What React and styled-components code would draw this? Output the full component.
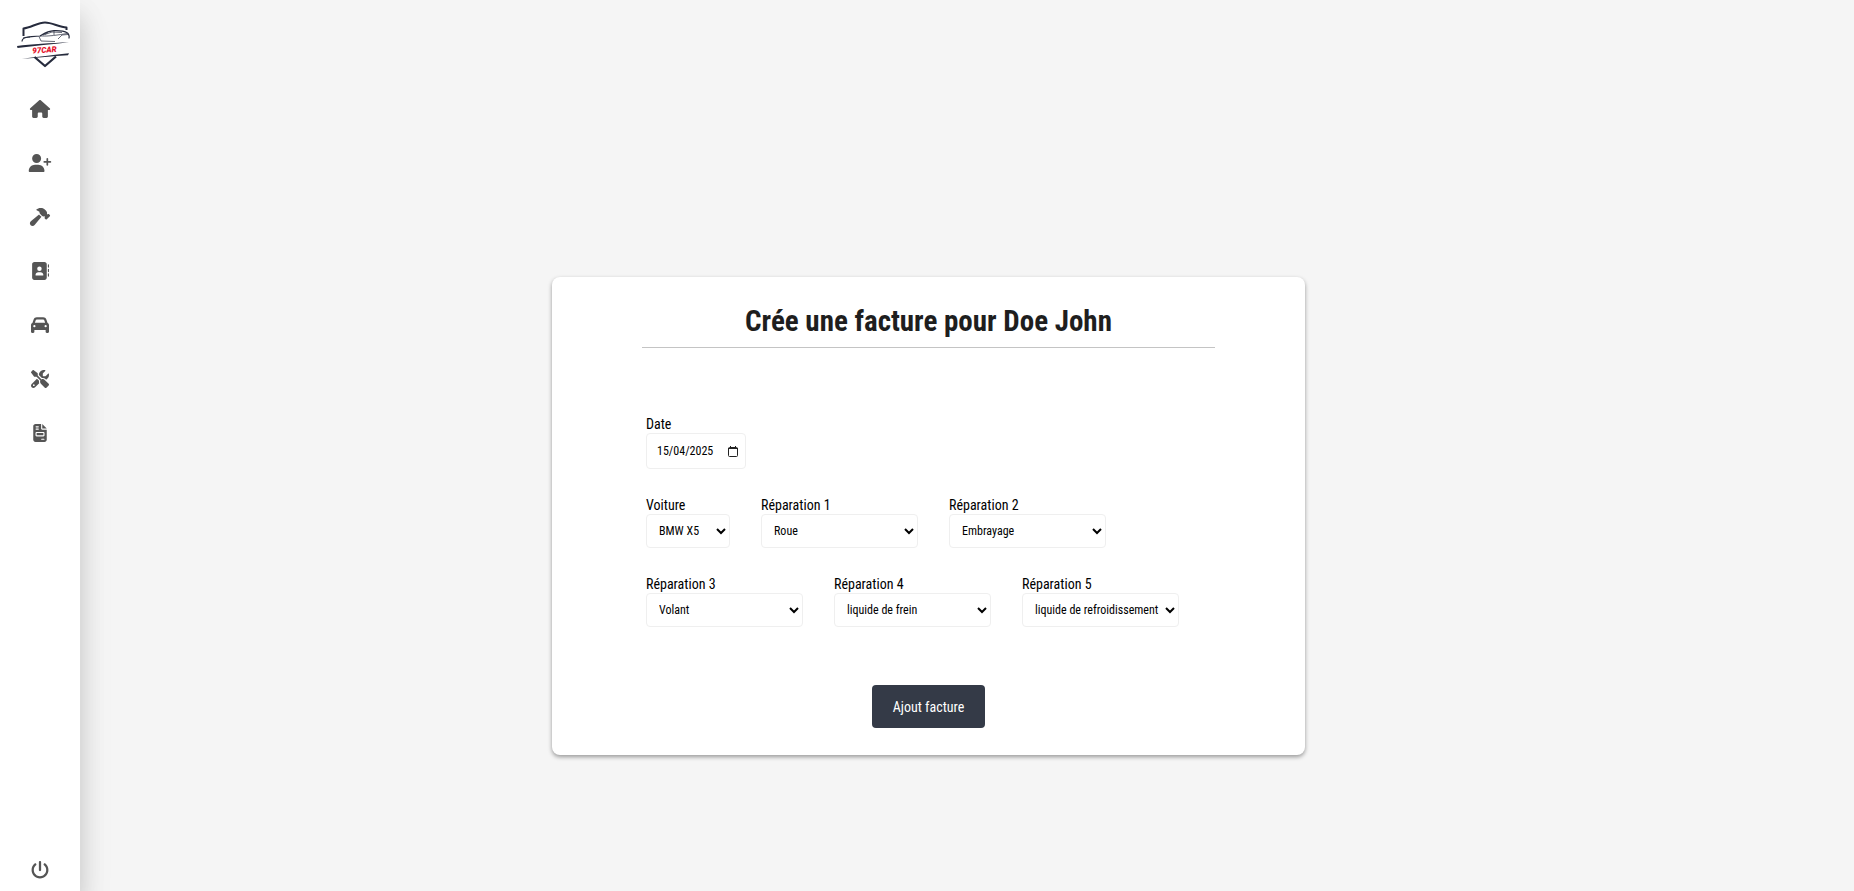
import React, { useState } from "react";
import styled, { createGlobalStyle } from "styled-components";
import {
  FaHouse,
  FaUserPlus,
  FaHammer,
  FaAddressBook,
  FaCar,
  FaScrewdriverWrench,
  FaFileInvoice,
  FaPowerOff,
} from "react-icons/fa6";

const FONT = '"Roboto Condensed", "Liberation Sans Narrow", Roboto, sans-serif';

const GlobalStyle = createGlobalStyle`
  *, *::before, *::after { box-sizing: border-box; }
  body {
    margin: 0;
    background: #f5f5f5;
    color: #000;
    font-family: ${FONT};
    font-size: 14px;
  }
`;

const Layout = styled.div`
  display: flex;
  min-height: 100vh;
`;

const Sidebar = styled.nav`
  display: flex;
  flex-direction: column;
  align-items: center;
  width: 80px;
  flex-shrink: 0;
  padding: 16px 1px 12px 0;
  background: #fff;
  box-shadow: 0 19px 38px rgba(0, 0, 0, 0.08), 0 15px 24px rgba(0, 0, 0, 0.15);
`;

const LogoLink = styled.a`
  display: block;
  margin-left: 9px;
  svg { display: block; width: 60px; height: 54px; }
`;

const NavList = styled.ul`
  display: flex;
  flex-direction: column;
  gap: 36px;
  margin: 30px 0 0;
  padding: 0;
  list-style: none;
`;

const NavLink = styled.a`
  display: block;
  color: #555;
  svg { display: block; width: 24px; height: 18px; }
`;

const LogoutLink = styled(NavLink)`
  margin-top: auto;
`;

const Main = styled.main`
  display: flex;
  flex: 1;
  align-items: center;
  justify-content: center;
  padding: 141px 77px 0 0;
`;

const Card = styled.section`
  width: 100%;
  max-width: 753px;
  padding: 24px 90px 27px;
  border-radius: 8px;
  background: #fff;
  box-shadow: 0 2px 4px rgba(0, 0, 0, 0.38);
`;

const Title = styled.h1`
  margin: 0;
  padding-bottom: 6px;
  border-bottom: 1px solid #c4c4c4;
  color: #1e1e1e;
  font-size: 29px;
  line-height: 40px;
  text-align: center;
`;

const Form = styled.form`
  display: flex;
  flex-direction: column;
  gap: 28px;
  padding: 68px 4px 0;
`;

const Row = styled.div`
  display: flex;
  flex-wrap: wrap;
  gap: 28px 31px;
`;

const Field = styled.div`
  display: flex;
  flex-direction: column;
  width: ${({ $width }) => $width}px;
`;

const Label = styled.label`
  line-height: 17px;
  white-space: nowrap;
`;

const Select = styled.select`
  width: 100%;
  height: 34px;
  padding: 0 0 0 8px;
  border: 1px solid #efefef;
  border-radius: 4px;
  background-color: #fff;
  color: #000;
  font-family: inherit;
  font-size: 12px;
`;

const DateBox = styled.div`
  display: flex;
  align-items: center;
  height: 36px;
  padding: 0 7px 0 10px;
  border: 1px solid #efefef;
  border-radius: 4px;
`;

const DateInput = styled.input`
  flex: 1;
  min-width: 0;
  padding: 0;
  border: 0;
  outline: 0;
  background: transparent;
  color: #000;
  font-family: inherit;
  font-size: 12px;
`;

const PickerButton = styled.button`
  display: block;
  padding: 0;
  border: 0;
  background: transparent;
  cursor: pointer;
  svg { display: block; width: 10px; height: 11px; }
`;

const SubmitButton = styled.button`
  align-self: center;
  height: 43px;
  margin-top: 30px;
  padding: 0 21px;
  border: 0;
  border-radius: 4px;
  background: #343a47;
  color: #fff;
  font-family: inherit;
  font-size: 14px;
  cursor: pointer;
`;

const LogoText = styled.text`
  fill: #e5112b;
  font-family: Roboto, sans-serif;
  font-size: 8px;
  font-style: italic;
  font-weight: 900;
`;

const Logo = () => (
  <svg viewBox="0 0 60 54" role="img" aria-label="97CAR">
    <g fill="none" stroke="#262b3d" strokeLinejoin="round">
      <path d="M9.5 20V12.5C17 11.5 24 6.5 31 6.5C38 6.5 45 11 52.5 11.5V14" strokeWidth="2" />
      <path d="M8 25.5C8 22.5 10 21.5 14 21C19 20.500 22 20 26 20C31 17 34 15 40 14.700C46 14.500 51 15.500 53.500 17C55 18.500 55.500 20 55 22.500" strokeWidth="1.200" />
      <path d="M26 20C35 20.500 44 19 53 17.500M25 20.500L27 25L41 25.500M31 18.500L38 16L48 16.500M40 15V19M44 23L48 19L54 18.500" strokeWidth="0.700" />
      <path d="M9 22L16 21M29 19L34 16.500" strokeWidth="0.900" />
      <path d="M20.500 41L31 50L42 40.500" strokeWidth="2.300" />
    </g>
    <g fill="#262b3d">
      <path d="M3 30C17 28 37 27.200 55 26.200C38 28.200 21 29.800 3.500 32Z" />
      <path d="M8 42.800C24 41 39 39 55 37.300L54 39.200C39 40 23 42 8 42.800Z" />
    </g>
    <LogoText x="18.500" y="37.600" transform="rotate(-4 18.500 37.600)">97CAR</LogoText>
  </svg>
);

const NAV = [
  ["Accueil", FaHouse],
  ["Ajouter un client", FaUserPlus],
  ["Ajouter une réparation", FaHammer],
  ["Clients", FaAddressBook],
  ["Voitures", FaCar],
  ["Réparations", FaScrewdriverWrench],
  ["Factures", FaFileInvoice],
];

const REPAIRS = ["Roue", "Embrayage", "Volant", "liquide de frein", "liquide de refroidissement"];

function SelectField({ id, label, width, options, initial }) {
  return (
    <Field $width={width}>
      <Label htmlFor={id}>{label}</Label>
      <Select id={id} name={id} defaultValue={initial}>
        {options.map((option) => (
          <option key={option}>{option}</option>
        ))}
      </Select>
    </Field>
  );
}

function RepairField({ number }) {
  return (
    <SelectField
      id={`reparation-${number}`}
      label={`Réparation ${number}`}
      width={157}
      options={REPAIRS}
      initial={REPAIRS[number - 1]}
    />
  );
}

export default function App() {
  const [date, setDate] = useState("15/04/2025");
  return (
    <>
      <GlobalStyle />
      <Layout>
        <Sidebar aria-label="Navigation principale">
          <LogoLink href="#"><Logo /></LogoLink>
          <NavList>
            {NAV.map(([label, Icon]) => (
              <li key={label}>
                <NavLink href="#" aria-label={label}><Icon /></NavLink>
              </li>
            ))}
          </NavList>
          <LogoutLink href="#" aria-label="Déconnexion"><FaPowerOff /></LogoutLink>
        </Sidebar>
        <Main>
          <Card>
            <Title>Crée une facture pour Doe John</Title>
            <Form onSubmit={(event) => event.preventDefault()}>
              <Row>
                <Field $width={100}>
                  <Label htmlFor="date">Date</Label>
                  <DateBox>
                    <DateInput id="date" name="date" inputMode="numeric" value={date} onChange={(event) => setDate(event.target.value)} />
                    <PickerButton type="button" aria-label="Ouvrir le calendrier">
                      <svg viewBox="0 0 10 11" fill="none" stroke="#222">
                        <rect x="0.5" y="1.5" width="9" height="9" rx="1" />
                        <path d="M0 2.5H10M2.5 0V2M7.5 0V2" />
                      </svg>
                    </PickerButton>
                  </DateBox>
                </Field>
              </Row>
              <Row>
                <SelectField id="voiture" label="Voiture" width={84} options={["BMW X5"]} initial="BMW X5" />
                <RepairField number={1} />
                <RepairField number={2} />
              </Row>
              <Row>
                <RepairField number={3} />
                <RepairField number={4} />
                <RepairField number={5} />
              </Row>
              <SubmitButton type="submit">Ajout facture</SubmitButton>
            </Form>
          </Card>
        </Main>
      </Layout>
    </>
  );
}
